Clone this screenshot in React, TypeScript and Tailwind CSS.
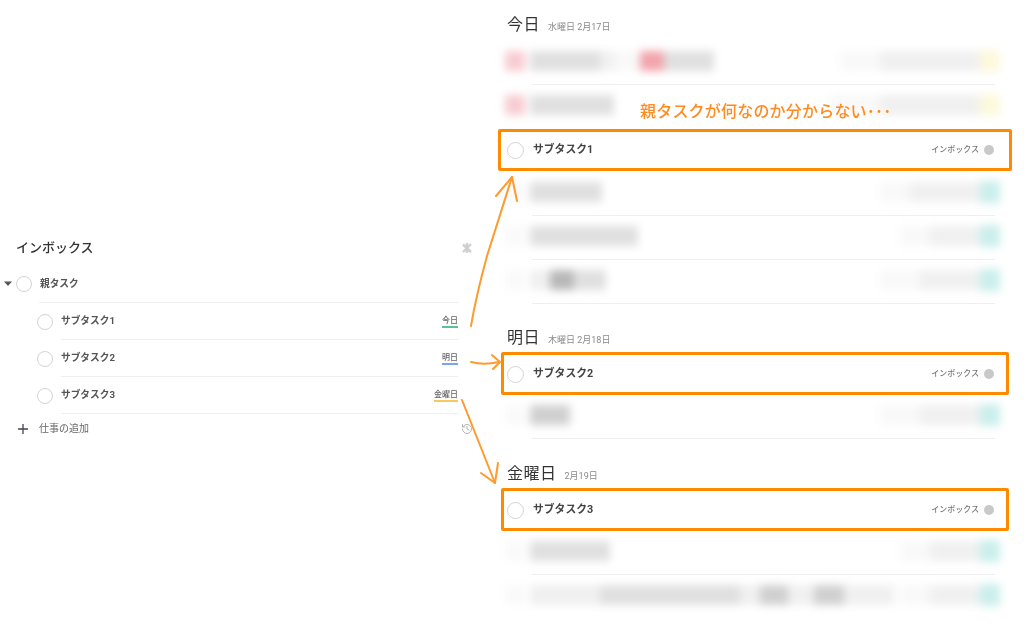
import { History } from 'lucide-react'

const font = { fontFamily: '"Roboto", "Noto Sans CJK JP", sans-serif' }

interface Blob {
  w: number
  color: string
}

const g1 = 'bg-[#f9f9f9]'
const g2 = 'bg-[#f0f0f0]'
const g3 = 'bg-[#e0e0e0]'
const g4 = 'bg-[#d0d0d0]'
const g5 = 'bg-[#b8b8b8]'

function Circle({ size = 'w-[17px] h-[17px]' }: { size?: string }) {
  return <span className={`${size} shrink-0 rounded-full border border-[#d4d4d4] bg-white`} />
}

function BlurRow({ mark, left, right, tint, line = true }: { mark?: string; left: Blob[]; right: Blob[]; tint: string; line?: boolean }) {
  return (
    <div className="h-[44px] pb-[5px] flex flex-col justify-center relative">
      <div className="flex items-center h-[30px] mr-[12px] blur-[4px]">
        <span className={`w-[20px] h-[20px] ml-[5px] mr-[5px] shrink-0 ${mark ?? 'bg-[#fafafa]'}`} />
        <div className="flex items-center flex-1">
          {left.map((b, i) => (
            <span key={i} className={`h-[20px] ${b.color}`} style={{ width: b.w }} />
          ))}
        </div>
        <div className="flex items-center">
          {right.map((b, i) => (
            <span key={i} className={`h-[20px] ${b.color}`} style={{ width: b.w }} />
          ))}
          <span className={`w-[20px] h-[22px] ${tint}`} />
        </div>
      </div>
      {line && <div className="absolute bottom-0 left-[32px] right-[17px] h-px bg-[#efefef]" />}
    </div>
  )
}

function Heading({ title, sub }: { title: string; sub: string }) {
  return (
    <div className="flex items-baseline gap-2 pl-[7px]">
      <span className="text-[16px] text-[#333] tracking-[0.5px]">{title}</span>
      <span className="text-[9px] text-[#8a8a8a]">{sub}</span>
    </div>
  )
}

function Marked({ name, className }: { name: string; className: string }) {
  return (
    <div className={`flex items-center border-[3px] border-[#ff8a00] rounded-[2px] bg-white ${className}`}>
      <Circle />
      <span className="ml-[9px] flex-1 text-[10.8px] font-bold text-[#444]">{name}</span>
      <span className="text-[8px] text-[#777] font-medium">インボックス</span>
      <span className="ml-[5px] w-[10px] h-[10px] rounded-full bg-[#c8c8c8]" />
    </div>
  )
}

function SubTask({ name, date, bar }: { name: string; date: string; bar: string }) {
  return (
    <div className="h-[37px] flex items-center ml-[33px] relative">
      <Circle size="w-[16px] h-[16px]" />
      <span className="ml-2 flex-1 text-[9.7px] font-bold text-[#555]">{name}</span>
      <span className={`text-[8px] font-medium text-[#666] border-b-2 ${bar} leading-[11px]`}>{date}</span>
      <div className="absolute bottom-0 left-[24px] right-0 h-px bg-[#efefef]" />
    </div>
  )
}

export default function App() {
  return (
    <div className="relative w-[1024px] h-[630px] overflow-hidden bg-white flex blur-[0.3px]" style={font}>
      {/* 左：プロジェクト */}
      <div className="w-[498px] shrink-0 pt-[238px] pl-1">
        <div className="w-[454px] flex flex-col">
          <div className="h-[20px] flex items-center justify-between pl-3 -mr-[15px]">
            <span className="text-[13px] font-medium text-[#333]">インボックス</span>
            <svg width="12" height="12" viewBox="0 0 12 12">
              <path d="M2 2.5L10 10M10 2L2 10M6 1v10" stroke="#cfcfcf" strokeWidth="2.4" />
            </svg>
          </div>
          <div className="h-[38px] mt-[7px] flex items-center relative">
            <svg width="9" height="6" viewBox="0 0 9 6" className="mr-[3px]">
              <path d="M0 0.5h8L4 5z" fill="#555" />
            </svg>
            <Circle size="w-[16px] h-[16px]" />
            <span className="ml-2 text-[9.7px] font-bold text-[#555]">親タスク</span>
            <div className="absolute bottom-0 left-[35px] right-0 h-px bg-[#efefef]" />
          </div>
          <SubTask name="サブタスク1" date="今日" bar="border-[#5cc197]" />
          <SubTask name="サブタスク2" date="明日" bar="border-[#7ba5ea]" />
          <SubTask name="サブタスク3" date="金曜日" bar="border-[#f8c860]" />
          <div className="h-[29px] flex items-center pl-[14px] -mr-[15px]">
            <svg width="10" height="10" viewBox="0 0 10 10">
              <path d="M5 0v10M0 5h10" stroke="#445" strokeWidth="1.3" />
            </svg>
            <span className="ml-[11px] flex-1 text-[10px] text-[#666]">仕事の追加</span>
            <History size={12} color="#b5b5b5" />
          </div>
        </div>
      </div>

      {/* 右：日別 */}
      <div className="flex-1 pt-[13px] pr-[29px] pl-[2px] flex flex-col">
        <Heading title="今日" sub="水曜日 2月17日" />
        <div className="mt-[4px]">
          <BlurRow
            tint="bg-[#fdf9dc]"
            mark="bg-[#f8ccd2]"
            left={[{ w: 70, color: g3 }, { w: 14, color: g2 }, { w: 26, color: g1 }, { w: 24, color: 'bg-[#f2a4ac]' }, { w: 50, color: g3 }]}
            right={[{ w: 40, color: g1 }, { w: 100, color: g2 }]}
          />
          <BlurRow
            tint="bg-[#fdf9dc]"
            mark="bg-[#f8ccd2]"
            line={false}
            left={[{ w: 84, color: g3 }]}
            right={[{ w: 50, color: g1 }, { w: 100, color: g2 }]}
          />
        </div>
        <Marked name="サブタスク1" className="h-[42px] -ml-[2px] w-[514px] pl-[6px] pr-[15px]" />
        <div className="mt-px">
          <BlurRow tint="bg-[#caefec]" left={[{ w: 72, color: g3 }]} right={[{ w: 30, color: g1 }, { w: 70, color: g2 }]} />
        </div>
        <BlurRow tint="bg-[#caefec]" left={[{ w: 108, color: g3 }]} right={[{ w: 30, color: g1 }, { w: 50, color: g2 }]} />
        <BlurRow
          tint="bg-[#caefec]"
          left={[{ w: 20, color: g2 }, { w: 24, color: g5 }, { w: 32, color: g3 }]}
          right={[{ w: 40, color: g1 }, { w: 60, color: g2 }]}
        />
        <div className="mt-[22px]">
          <Heading title="明日" sub="木曜日 2月18日" />
        </div>
        <Marked name="サブタスク2" className="h-[43px] mt-[2px] ml-px w-[508px] pt-px pl-[3px] pr-[12px]" />
        <BlurRow tint="bg-[#caefec]" left={[{ w: 40, color: g4 }]} right={[{ w: 40, color: g1 }, { w: 60, color: g2 }]} />
        <div className="mt-[23px]">
          <Heading title="金曜日" sub="2月19日" />
        </div>
        <Marked name="サブタスク3" className="h-[43px] mt-[2px] ml-px w-[508px] pt-px pl-[3px] pr-[12px]" />
        <BlurRow tint="bg-[#caefec]" left={[{ w: 80, color: g3 }]} right={[{ w: 30, color: g1 }, { w: 50, color: g2 }]} />
        <BlurRow
          tint="bg-[#caefec]"
          line={false}
          left={[
            { w: 70, color: g2 },
            { w: 140, color: g3 },
            { w: 20, color: g2 },
            { w: 28, color: g4 },
            { w: 26, color: g2 },
            { w: 30, color: g4 },
            { w: 50, color: g2 },
          ]}
          right={[{ w: 30, color: g1 }, { w: 50, color: g2 }]}
        />
      </div>

      {/* 注釈 */}
      <span className="absolute left-[640px] top-[100px] text-[16px] text-[#ff8a1e] font-medium tracking-[0.2px]">親タスクが何なのか分からない･･･</span>
      <svg className="absolute inset-0 pointer-events-none" width="1024" height="630" viewBox="0 0 1024 630" fill="none">
        <g stroke="#ff9a2e" strokeWidth="2" strokeLinecap="round" strokeLinejoin="round">
          <path d="M471 326C475 302 481 278 487 256L512 177" />
          <path d="M496 196L512 177L517 201" />
          <path d="M471 362C482 365 490 364 499 362" />
          <path d="M492 355L500 362L493 369" />
          <path d="M462 400L495 483" />
          <path d="M481 473L495 483L498 463" />
        </g>
      </svg>
    </div>
  )
}
